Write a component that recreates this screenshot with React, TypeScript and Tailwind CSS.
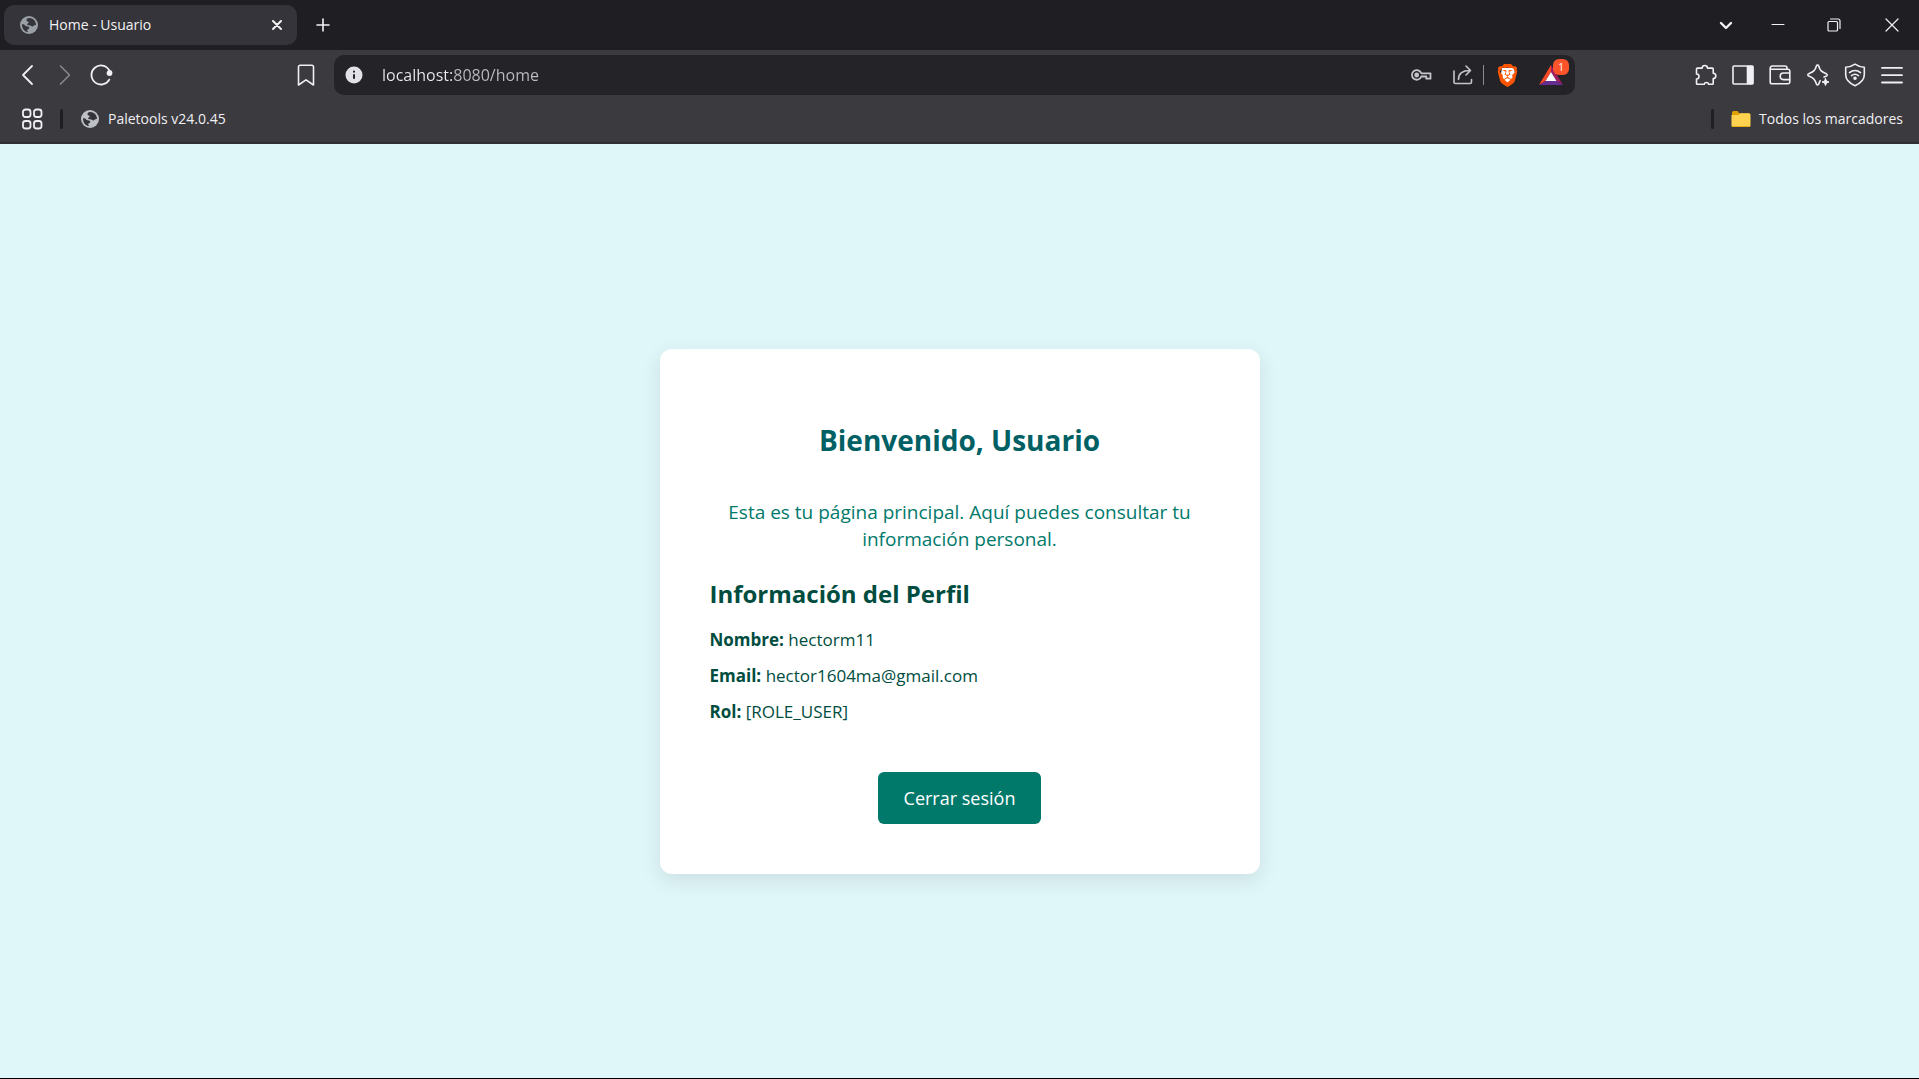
import type { ReactNode } from "react";
import { SiBrave } from "react-icons/si";

const UI_FONT = "font-['Open_Sans','Noto_Sans',sans-serif]";

function Line({ children, size = 24, width = 1.6 }: { children: ReactNode; size?: number; width?: number }) {
  return (
    <svg
      width={size}
      height={size}
      viewBox={`0 0 ${size} ${size}`}
      fill="none"
      stroke="currentColor"
      strokeWidth={width}
      strokeLinecap="round"
      strokeLinejoin="round"
      aria-hidden="true"
    >
      {children}
    </svg>
  );
}

function IconButton({ label, children, className = "" }: { label: string; children: ReactNode; className?: string }) {
  return (
    <button type="button" aria-label={label} className={`flex size-6 shrink-0 items-center justify-center ${className}`}>
      {children}
    </button>
  );
}

function Globe({ className }: { className: string }) {
  return (
    <svg width="18" height="18" viewBox="0 0 18 18" className={`shrink-0 ${className}`} aria-hidden="true">
      <circle cx="9" cy="9" r="9" fill="currentColor" />
      <path
        fill="#35343a"
        d="M8.6 2C6.6 2.6 5.9 4 6.9 4.9c.8.7 2 .5 1.9 1.6-.1.9-1.6.8-1.7 1.7-.1.8.9 1.1 2 1.1 1.6 0 2 1.1 3.3 1.1 1.1 0 1.2-1.2 2.2-1.2.8 0 1.3-.1 1.4-.4C16 5 12.9 1.7 8.6 2z"
      />
      <path
        fill="#35343a"
        d="M2 8.200c1.500-.2 2.500.3 3.200 1.300.6.9 1.500.8 2.600.9 1.400.1 1.900 1.300 1.200 2.200-.7.800-1.500.700-1.700 1.700-.1.800.300 1 1 1.700C4.700 16 1.800 12.600 2 8.200z"
      />
    </svg>
  );
}

function BatIcon() {
  return (
    <svg width="24" height="20" viewBox="0 0 24 20" aria-hidden="true">
      <path fill="#ff4724" d="M12 0 0 20l6.500-4L12 7z" />
      <path fill="#9e1f63" d="M12 0l12 20-6.500-4L12 7z" />
      <path fill="#662d91" d="M0 20h24l-6.500-4h-11z" />
      <path fill="#fff" d="M12 7l5.500 9h-11z" />
    </svg>
  );
}

function TabStrip() {
  return (
    <header className="flex h-[50px] items-center bg-[#1f1e23] pr-[15px] pl-1 text-[#f2f2f4]">
      <div className="flex h-10 w-[293px] items-center rounded-[10px] bg-[#35343a] pr-2 pl-4">
        <Globe className="text-[#9aa0a6]" />
        <span className="ml-[11px] flex-1 text-sm">Home - Usuario</span>
        <IconButton label="Cerrar pestaña">
          <Line size={10} width={2}>
            <path d="M1 1l8 8M9 1 1 9" />
          </Line>
        </IconButton>
      </div>
      <IconButton label="Nueva pestaña" className="ml-[14px]">
        <Line size={14} width={1.6}>
          <path d="M7 1v12M1 7h12" />
        </Line>
      </IconButton>
      <div className="ml-auto flex items-center">
        <IconButton label="Buscar pestañas">
          <Line size={14} width={2.4}>
            <path d="M2 5l5 5 5-5" />
          </Line>
        </IconButton>
        <IconButton label="Minimizar" className="ml-7">
          <Line size={14} width={1}>
            <path d="M1 6.500h12" />
          </Line>
        </IconButton>
        <IconButton label="Restaurar" className="ml-8">
          <Line size={14} width={1.2}>
            <rect x="1" y="3.500" width="9.500" height="9.500" rx="1" />
            <path d="M3.500 1h7.500a2 2 0 0 1 2 2v7.500" />
          </Line>
        </IconButton>
        <IconButton label="Cerrar" className="ml-[34px]">
          <Line size={14} width={1.2}>
            <path d="M1 1l12 12M13 1 1 13" />
          </Line>
        </IconButton>
      </div>
    </header>
  );
}

function AddressBar() {
  return (
    <div className="mr-[119px] ml-4 flex h-10 flex-1 items-center rounded-[10px] bg-[#242328] pr-3 pl-2">
      <IconButton label="Ver información del sitio">
        <svg width="18" height="18" viewBox="0 0 18 18" aria-hidden="true">
          <circle cx="9" cy="9" r="8.500" fill="#e3e1e8" />
          <path d="M9 8.200v4.500M9 4.800v1.700" stroke="#242328" strokeWidth="2" />
        </svg>
      </IconButton>
      <input
        type="text"
        aria-label="Barra de direcciones"
        defaultValue="localhost:8080/home"
        className="ml-4 min-w-0 flex-1 bg-linear-to-r from-[#ececf0] from-[71px] to-[#bdbcc2] to-[71px] bg-clip-text text-base text-transparent caret-white outline-none"
      />
      <div className="flex items-center text-[#c6c5cb]">
        <IconButton label="Contraseñas">
          <Line width={1.8}>
            <path d="M12.300 10.300H21.500v5.400h-4.200v-2.200h-5a4.800 4.800 0 1 1 0-3.200z" />
            <circle cx="7.700" cy="12" r="1.500" fill="currentColor" />
          </Line>
        </IconButton>
        <IconButton label="Compartir" className="ml-[18px]">
          <Line width={1.6}>
            <path d="M3 8v11a1.500 1.500 0 0 0 1.500 1.500h14.500a1.500 1.500 0 0 0 1.500-1.500v-2.500" />
            <path d="M7.500 16.500C7.500 11 11 7.500 19 7.500M15 3l4.500 4.500L15 12" />
          </Line>
        </IconButton>
        <span className="ml-2 h-5 w-px bg-[#8b8a90]" />
        <button type="button" aria-label="Escudos de Brave" className="ml-3 grid h-6 w-[22px] place-items-center">
          <svg width="16" height="18" viewBox="0 0 16 18" className="col-start-1 row-start-1" aria-hidden="true">
            <path fill="#fff" d="M2 2h12l1 6-3 7-4 2-4-2-3-7z" />
          </svg>
          <SiBrave className="col-start-1 row-start-1 size-[23px] text-[#ff5500]" />
        </button>
        <button type="button" aria-label="Brave Rewards" className="relative ml-[21px] flex size-6 items-center justify-center">
          <BatIcon />
          <span className="absolute -top-1 left-3.5 flex size-4 items-center justify-center rounded-md bg-[#fb542b] text-[10px] leading-none text-white">
            1
          </span>
        </button>
      </div>
    </div>
  );
}

function Toolbar() {
  return (
    <div className="flex h-[50px] items-center px-[15px]">
      <IconButton label="Atrás">
        <Line width={1.8}>
          <path d="M17 3l-9 9 9 9" />
        </Line>
      </IconButton>
      <IconButton label="Adelante" className="ml-[14px] text-[#89888d]">
        <Line width={1.6}>
          <path d="M7.500 3l9 9-9 9" />
        </Line>
      </IconButton>
      <IconButton label="Recargar" className="ml-3">
        <Line width={1.8}>
          <path d="M20.300 16.600A9.500 9.500 0 1 1 20.200 7.200" />
          <circle cx="20.500" cy="10" r="2" fill="currentColor" />
        </Line>
      </IconButton>
      <IconButton label="Añadir marcador" className="ml-[181px]">
        <Line>
          <path d="M4.500 4A1.700 1.700 0 0 1 6.200 2.300h11.600A1.700 1.700 0 0 1 19.500 4v18L12 16.800 4.500 22z" />
        </Line>
      </IconButton>
      <AddressBar />
      <div className="flex w-[210px] shrink-0 items-center justify-between">
        <IconButton label="Extensiones">
          <Line>
            <path d="M3.300 5.100h4.900a2.600 2.600 0 0 1 5.200 0h5a.8.8 0 0 1 .8.8v4.400a2.600 2.600 0 0 1 0 5.200v5a.8.8 0 0 1-.8.8h-3.700a2.300 2.300 0 0 0-4.500 0H3.300a.8.8 0 0 1-.8-.8V16a2.500 2.500 0 0 0 0-5V5.900a.8.8 0 0 1 .8-.8z" />
          </Line>
        </IconButton>
        <IconButton label="Barra lateral">
          <Line>
            <rect x="2" y="3" width="20" height="18" rx="1" />
            <path d="M16.500 3.500H21.500v17h-5z" fill="currentColor" />
          </Line>
        </IconButton>
        <IconButton label="Cartera">
          <Line>
            <path d="M2.200 5.500A2.200 2.200 0 0 1 4.400 3H17a2 2 0 0 1 2 2v1.200M2.200 5.500V19a1.800 1.800 0 0 0 1.800 1.800h16a1.800 1.800 0 0 0 1.800-1.800V8a1.800 1.800 0 0 0-1.800-1.800H3" />
            <path d="M21.500 10h-6a3.300 3.300 0 0 0 0 6.600h6" />
          </Line>
        </IconButton>
        <IconButton label="Leo">
          <Line>
            <path d="M14.200 17.600c-.6 1-1 2.200-1.500 3.500a1.200 1.200 0 0 1-2.300 0C9 16.500 7.500 14.700 2.700 13a1.200 1.200 0 0 1 0-2.300C7.500 9 9 7.500 10.400 2.900a1.200 1.200 0 0 1 2.300 0C14 7.500 15.600 9 20.300 10.700a1.200 1.200 0 0 1 .2 2.200l-2.500 1" />
            <path d="M19.500 15.500l1 2.500 2.500 1-2.500 1-1 2.500-1-2.500-2.500-1 2.500-1z" fill="currentColor" strokeWidth="1" />
          </Line>
        </IconButton>
        <IconButton label="VPN">
          <Line>
            <path d="M12 1.200c2.700 1.900 5.600 2.900 9.300 3.100v7.500c0 5.400-4 8.600-9.300 10.900-5.300-2.300-9.300-5.500-9.300-10.900V4.300C6.400 4.100 9.300 3.100 12 1.200z" />
            <path d="M6.500 9.600c3.300-2.700 7.700-2.700 11 0M8.500 12.600c2.200-1.700 4.800-1.700 7 0" />
            <circle cx="12" cy="15.300" r="1" fill="currentColor" />
          </Line>
        </IconButton>
        <IconButton label="Menú">
          <Line width={1.8}>
            <path d="M2 4.900h20M2 12.200h20M2 19.500h20" />
          </Line>
        </IconButton>
      </div>
    </div>
  );
}

function FolderIcon() {
  return (
    <svg width="20" height="17" viewBox="0 0 20 17" aria-hidden="true">
      <path fill="#e0a100" d="M1 1.500A1.500 1.500 0 0 1 2.500 0h4l2 2.500H18V6H1z" />
      <path fill="#ffd24f" d="M1 4h6.500L9 2.300h9A1.500 1.500 0 0 1 19.500 4v10.500A1.500 1.500 0 0 1 18 16H2a1.500 1.500 0 0 1-1.500-1.500V4z" />
      <path fill="#e0a100" d="M1 15.200h18a1.500 1.500 0 0 1-1 .8H2a1.500 1.500 0 0 1-1-.8z" />
    </svg>
  );
}

function BookmarksBar() {
  return (
    <nav aria-label="Marcadores" className="flex h-[42px] items-center pr-4 pb-1 pl-5">
      <IconButton label="Grupos de pestañas">
        <Line width={1.8}>
          <rect x="3" y="2.500" width="7.500" height="7.500" rx="2.500" />
          <rect x="14" y="2.500" width="7.500" height="7.500" rx="2.500" />
          <rect x="3" y="14" width="7.500" height="7.500" rx="2.500" />
          <rect x="14" y="14" width="7.500" height="7.500" rx="2.500" />
        </Line>
      </IconButton>
      <span className="ml-4 h-5 w-[3px] rounded-full bg-[#1f1e23]" />
      <a href="#paletools" className="ml-[18px] flex items-center gap-[9px] text-sm">
        <Globe className="text-[#bdc1c6]" />
        Paletools v24.0.45
      </a>
      <span className="ml-auto h-5 w-[3px] rounded-full bg-[#1f1e23]" />
      <button type="button" className="ml-[17px] flex items-center gap-2 text-sm">
        <FolderIcon />
        Todos los marcadores
      </button>
    </nav>
  );
}

const profile = [
  { label: "Nombre:", value: "hectorm11" },
  { label: "Email:", value: "hector1604ma@gmail.com" },
  { label: "Rol:", value: "[ROLE_USER]" },
];

function ProfileCard() {
  return (
    <section className="flex w-full max-w-[600px] flex-col items-center rounded-xl bg-white px-[50px] pt-[71px] pb-[50px] shadow-[0_6px_20px_rgba(0,0,0,0.1)]">
      <h1 className="text-[28px] leading-10 font-bold text-[#006064]">Bienvenido, Usuario</h1>
      <p className="mt-[39px] text-center text-[19px] leading-[27px] text-[#00796b]">
        Esta es tu página principal. Aquí puedes consultar tu información personal.
      </p>
      <div className="mt-[25px] w-full text-[#004d40]">
        <h2 className="text-2xl leading-8 font-bold">Información del Perfil</h2>
        <div className="mt-[18px] flex flex-col gap-3">
          {profile.map(({ label, value }) => (
            <p key={label} className="text-[17px] leading-6">
              <strong className="font-bold">{label}</strong> {value}
            </p>
          ))}
        </div>
      </div>
      <button type="button" className="mt-12 h-[52px] rounded-md bg-[#00796b] px-[26px] text-lg text-white">
        Cerrar sesión
      </button>
    </section>
  );
}

export default function App() {
  return (
    <div className={`flex min-h-screen flex-col border-b border-black bg-[#e0f7fa] ${UI_FONT}`}>
      <TabStrip />
      <div className="border-b-2 border-[#312f35] bg-[#3b3a3e] text-[#f0eff4]">
        <Toolbar />
        <BookmarksBar />
      </div>
      <main className="flex flex-1 items-center justify-center">
        <ProfileCard />
      </main>
    </div>
  );
}
